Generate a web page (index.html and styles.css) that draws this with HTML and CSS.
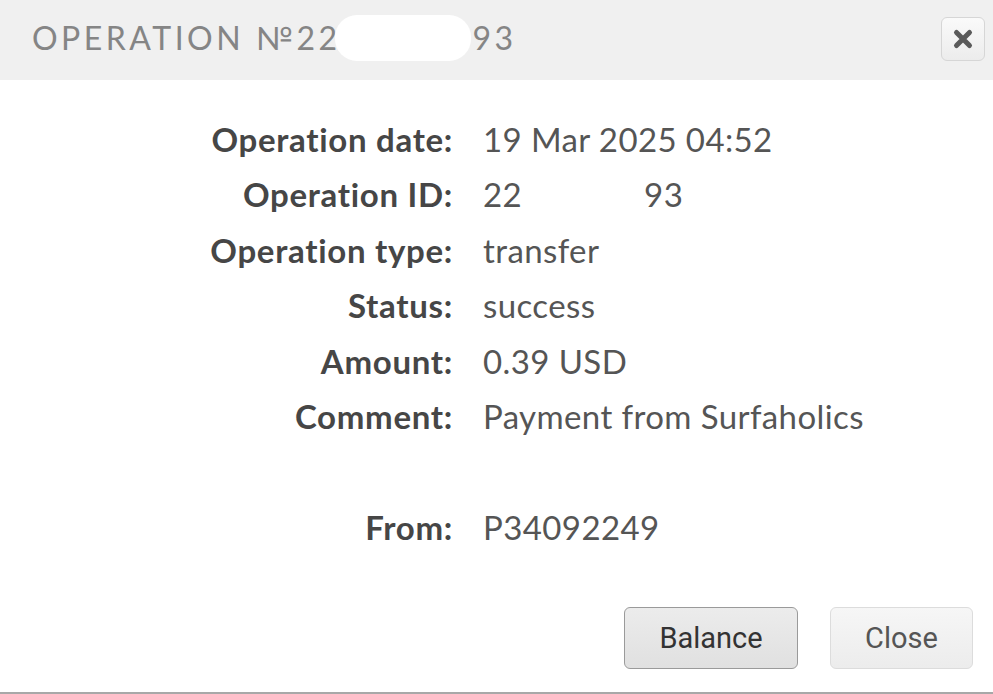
FILE: index.html
```html
<!DOCTYPE html>
<html>
<head>
<meta charset="utf-8">
<link rel="stylesheet" href="styles.css">
</head>
<body>
<div class="dialog">
  <header class="head">
    <h1 class="title">OPERATION №22<span class="blob"></span>93</h1>
    <button class="x-btn" aria-label="close">
      <svg width="22" height="22" viewBox="0 0 22 22"><path d="M4.5 4.5 L17.5 17.5 M17.5 4.5 L4.5 17.5" stroke="#5a5a5a" stroke-width="5" stroke-linecap="round"/></svg>
    </button>
  </header>
  <main class="body">
    <dl class="info">
      <dt>Operation date:</dt><dd>19 Mar 2025 04:52</dd>
      <dt>Operation ID:</dt><dd>22<span class="gap"></span>93</dd>
      <dt>Operation type:</dt><dd>transfer</dd>
      <dt>Status:</dt><dd>success</dd>
      <dt>Amount:</dt><dd>0.39 USD</dd>
      <dt>Comment:</dt><dd>Payment from Surfaholics</dd>
      <dt class="empty"></dt><dd class="empty"></dd>
      <dt>From:</dt><dd>P34092249</dd>
    </dl>
  </main>
  <footer class="foot">
    <button class="btn btn-primary">Balance</button>
    <button class="btn btn-close">Close</button>
  </footer>
</div>
</body>
</html>
```
FILE: styles.css
```css
* { box-sizing: border-box; }
html, body { margin: 0; padding: 0; background: #fff; }
body { width: 993px; height: 694px; overflow: hidden; }
.dialog {
  height: 694px;
  display: flex;
  flex-direction: column;
  border-bottom: 2px solid #a8a8a8;
}
.head {
  height: 80px;
  background: #f0f0f0;
  display: flex;
  align-items: center;
  justify-content: space-between;
  padding: 0 8px 0 32px;
}
.title {
  margin: 0 0 5px 0;
  font-family: "Lato", "DejaVu Sans", sans-serif;
  font-weight: 400;
  font-size: 32px;
  letter-spacing: 3.5px;
  color: #858585;
  display: flex;
  align-items: center;
}
.blob {
  display: inline-block;
  width: 136px;
  height: 46px;
  background: #fff;
  border-radius: 22px;
  margin: 0 2px 0 -6px;
}
.x-btn {
  width: 44px;
  height: 44px;
  border: 1px solid #d6d6d6;
  border-radius: 6px;
  background: linear-gradient(#fafafa, #ececec);
  display: flex;
  align-items: center;
  justify-content: center;
  padding: 0;
  margin-top: -2px;
}
.body {
  padding-top: 31px;
  flex: 1;
}
.info {
  margin: 0;
  display: grid;
  grid-template-columns: 453px 1fr;
  column-gap: 30px;
  grid-auto-rows: 55.5px;
  font-family: "Lato", "Open Sans", sans-serif;
  font-size: 33px;
  align-items: center;
}
.info dt {
  text-align: right;
  font-weight: 700;
  color: #464646;
  letter-spacing: 0.7px;
}
.info dd {
  margin: 0;
  color: #555;
  font-weight: 400;
  letter-spacing: 0.4px;
}
.gap { display: inline-block; width: 122px; }
.foot {
  display: flex;
  justify-content: flex-end;
  gap: 32px;
  padding: 0 20px 23px 0;
}
.btn {
  height: 62px;
  font-family: "Roboto", sans-serif;
  font-size: 29px;
  border-radius: 6px;
  padding: 0;
}
.btn-primary {
  width: 174px;
  color: #333;
  border: 1px solid #9a9a9a;
  background: linear-gradient(#ececec, #e0e0e0);
}
.btn-close {
  width: 143px;
  color: #555;
  border: 1px solid #dcdcdc;
  background: linear-gradient(#f6f6f6, #ececec);
}
```
